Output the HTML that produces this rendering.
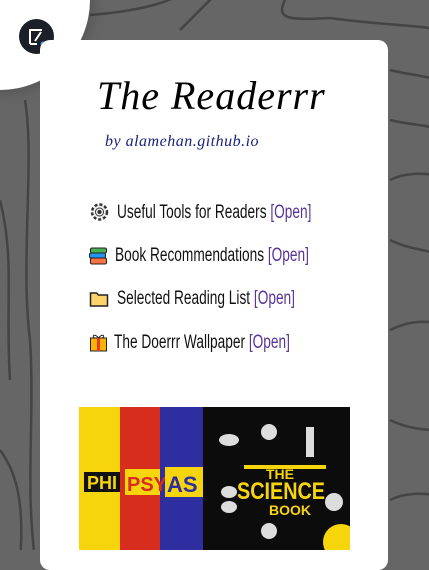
<!DOCTYPE html>
<html><head><meta charset="utf-8"><style>
html,body{margin:0;padding:0;width:429px;height:550px;overflow:hidden;background:#666;font-family:"Liberation Sans",sans-serif}
#bg{position:absolute;left:0;top:0}
.corner{position:absolute;left:-90px;top:-90px;width:180px;height:180px;border-radius:50%;background:#fff;box-shadow:0 0 18px rgba(0,0,0,.25)}
.logo{position:absolute;left:19px;top:19px;width:35px;height:35px;border-radius:50%;background:#1b1f27}
.card{position:absolute;left:40px;top:40px;width:348px;height:530px;background:#fff;border-radius:10px}
.title{position:absolute;left:97px;top:72px;font-family:"Liberation Serif",serif;font-style:italic;font-size:40px;color:#000;letter-spacing:1px}
.sub{position:absolute;left:105px;top:133px;font-family:"Liberation Serif",serif;font-style:italic;font-size:16px;color:#1a237e;letter-spacing:.5px}
.item{position:absolute;font-size:19px;color:#111;white-space:nowrap;transform:scaleX(.72);transform-origin:left}
.item span{color:#5a3596}
.ic{position:absolute;width:21px;height:20px}
.books{position:absolute;left:79px;top:407px;height:143px;width:271px}
</style></head><body>
<svg id="bg" width="429" height="550" fill="none" stroke="#444" stroke-width="2.5">
<path d="M90 15 C150 10 170 0 180 -5"/><path d="M180 30 C200 10 210 0 215 -5"/>
<path d="M285 0 C275 20 290 20 330 18 C380 25 420 25 440 30"/>
<path d="M390 70 C410 75 420 75 440 80"/><path d="M390 120 C410 125 430 125 440 130"/>
<path d="M390 180 C410 170 430 175 440 175"/><path d="M390 240 C410 250 430 250 440 255"/>
<path d="M390 330 C410 320 430 320 440 325"/><path d="M390 420 C410 430 430 430 440 430"/>
<path d="M390 500 C410 490 430 495 440 495"/>
<path d="M25 100 C35 160 20 260 30 340 C35 420 25 480 35 560"/>
<path d="M0 200 C15 260 5 300 10 380"/><path d="M0 450 C15 470 25 500 20 560"/>
</svg>
<div class="corner"></div>
<div class="logo"><svg width="35" height="35"><path d="M11 25V11h12M11 25h7" stroke="#fff" stroke-width="2" fill="none"/><path d="M16 22l6-9" stroke="#fff" stroke-width="2"/><circle cx="24" cy="25" r="2.5" fill="#4a8ef0"/></svg></div>
<div class="card"></div>
<div class="title">The Readerrr</div>
<div class="sub">by alamehan.github.io</div>
<svg class="ic" style="left:89px;top:202px" viewBox="0 0 20 20"><circle cx="10" cy="10" r="7.5" fill="#eee" stroke="#333" stroke-width="2.5" stroke-dasharray="3 2"/><circle cx="10" cy="10" r="4" fill="#fff" stroke="#333"/><circle cx="10" cy="10" r="2.2" fill="#333"/></svg>
<div class="item" style="left:117px;top:202px">Useful Tools for Readers <span>[Open]</span></div>
<svg class="ic" style="left:88px;top:246px" viewBox="0 0 20 20"><rect x="2" y="2" width="16" height="5" rx="1.5" fill="#4caf50" stroke="#222"/><rect x="1" y="7" width="16" height="5" rx="1.5" fill="#2196f3" stroke="#222"/><rect x="2" y="12" width="16" height="6" rx="1.5" fill="#ff7043" stroke="#222"/></svg>
<div class="item" style="left:115px;top:245px">Book Recommendations <span>[Open]</span></div>
<svg class="ic" style="left:89px;top:289px" viewBox="0 0 20 20"><path d="M1 4h6l2 2h9v11H1z" fill="#ffd36b" stroke="#222" stroke-width="1.5"/></svg>
<div class="item" style="left:117px;top:288px">Selected Reading List <span>[Open]</span></div>
<svg class="ic" style="left:88px;top:332px" viewBox="0 0 20 20"><rect x="2" y="6" width="16" height="13" fill="#ffb300" stroke="#222"/><rect x="8.5" y="6" width="3" height="13" fill="#e53935"/><path d="M10 6C6 1 3 4 6 6M10 6c4-5 7-2 4 0" stroke="#222" fill="none"/></svg>
<div class="item" style="left:114px;top:332px">The Doerrr Wallpaper <span>[Open]</span></div>
<svg class="books" viewBox="0 0 271 143">
<rect x="0" y="0" width="42" height="143" fill="#f7d50c"/>
<rect x="41" y="0" width="41" height="143" fill="#d62d1e"/>
<rect x="81" y="0" width="43" height="143" fill="#2e2ea0"/>
<rect x="124" y="0" width="147" height="143" fill="#0c0c0c"/>
<rect x="5" y="65" width="36" height="20" fill="#111"/>
<text x="8" y="82" font-size="18" font-weight="bold" fill="#f7d50c" font-family="Liberation Sans">PHI</text>
<rect x="46" y="62" width="35" height="26" fill="#f7d50c"/>
<text x="48" y="84" font-size="20" font-weight="bold" fill="#d62d1e" font-family="Liberation Sans">PSY</text>
<rect x="86" y="60" width="38" height="30" fill="#f7d50c"/>
<text x="88" y="85" font-size="22" font-weight="bold" fill="#2e2ea0" font-family="Liberation Sans">AS</text>
<rect x="165" y="58" width="82" height="4" fill="#f7d50c"/>
<text x="187" y="72" font-size="14" font-weight="bold" fill="#f7d50c" font-family="Liberation Sans">THE</text>
<text x="158" y="92" font-size="24" font-weight="bold" fill="#f7d50c" font-family="Liberation Sans" textLength="88" lengthAdjust="spacingAndGlyphs">SCIENCE</text>
<text x="190" y="108" font-size="14" font-weight="bold" fill="#f7d50c" font-family="Liberation Sans">BOOK</text>
<circle cx="262" cy="135" r="18" fill="#f7d50c"/>
<g fill="#ddd"><ellipse cx="150" cy="33" rx="10" ry="6"/><circle cx="190" cy="25" r="8"/><rect x="227" y="20" width="8" height="30"/><ellipse cx="150" cy="85" rx="8" ry="6"/><ellipse cx="150" cy="100" rx="8" ry="6"/><circle cx="190" cy="124" r="8"/><circle cx="255" cy="95" r="9"/></g>
</svg>
</body></html>
